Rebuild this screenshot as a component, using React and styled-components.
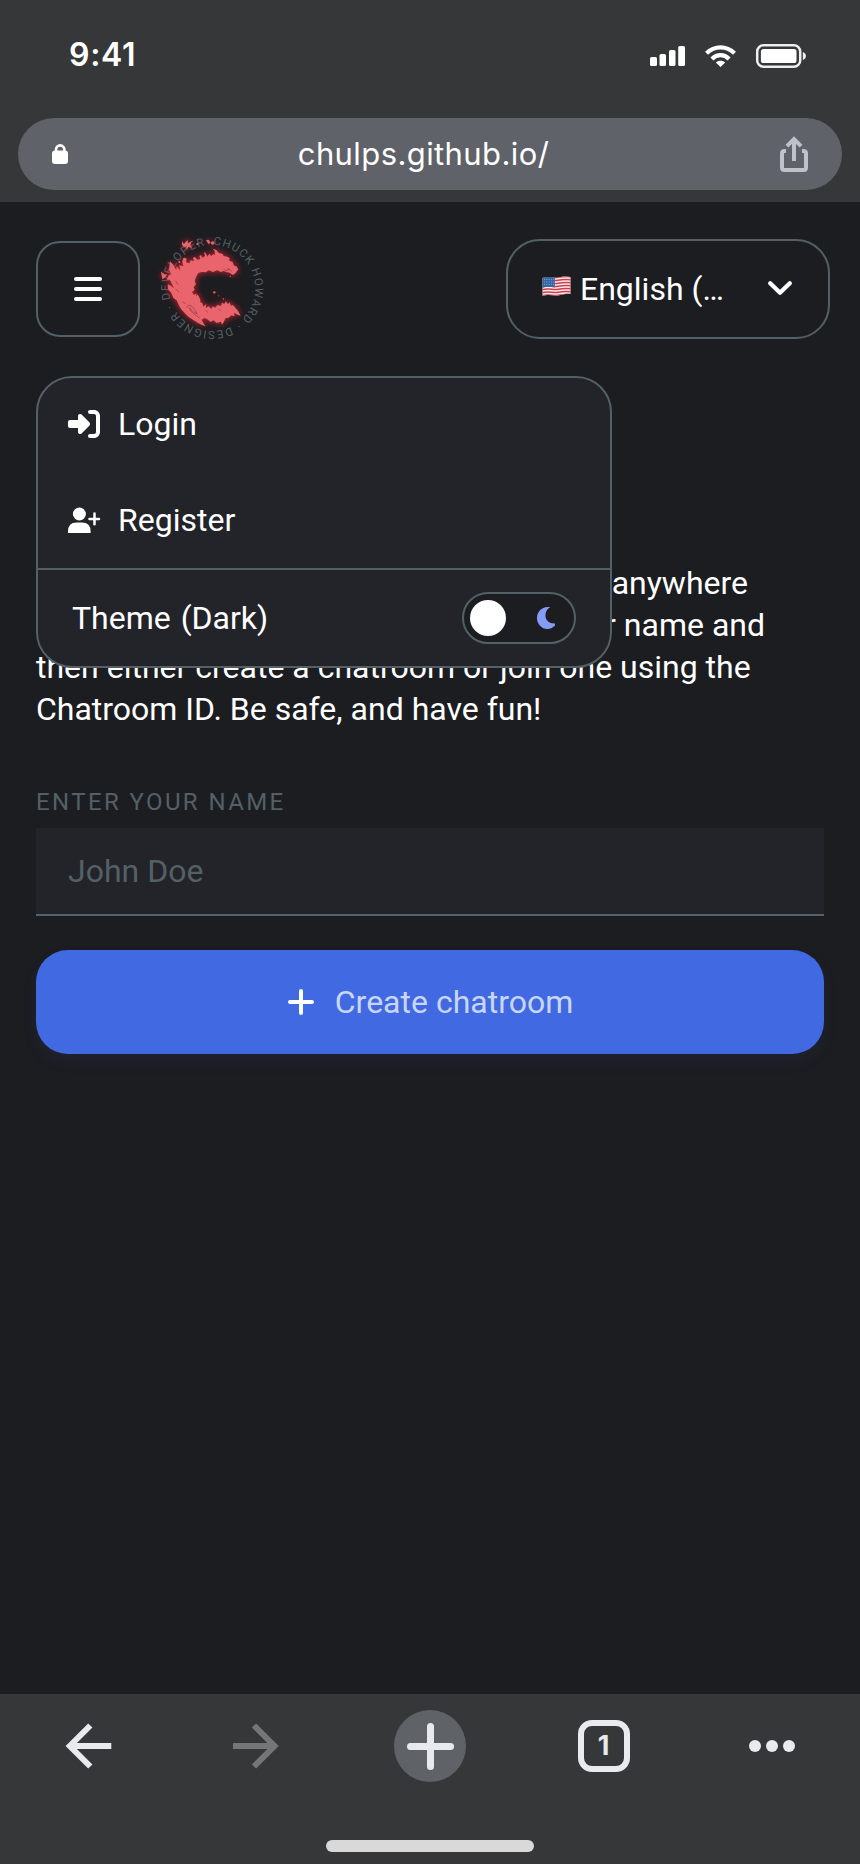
import React from 'react';
import styled, { createGlobalStyle } from 'styled-components';
import { FaRightToBracket } from 'react-icons/fa6';

const color = {
  chrome: '#363738',
  page: '#1c1d21',
  surface: '#232429',
  line: '#536066',
  accent: '#4169e1',
  icon: '#e8eaed',
};

const GlobalStyle = createGlobalStyle`
  *, *::before, *::after { box-sizing: border-box; }
  body { margin: 0; background: ${color.page}; }
  button, input { font: inherit; letter-spacing: inherit; }
  svg { display: block; flex: none; overflow: visible; }
`;

const Screen = styled.div`
  width: 860px;
  height: 1864px;
  display: flex;
  flex-direction: column;
  overflow: hidden;
  background: ${color.page};
  color: #fff;
  font: 400 32px/42px Roboto, sans-serif;
`;

const BrowserHeader = styled.header`
  height: 202px;
  padding: 0 18px;
  background: ${color.chrome};
  font-family: Inter, sans-serif;
`;

const StatusBar = styled.div`
  height: 118px;
  padding: 0 36px 8px 51px;
  display: flex;
  align-items: center;
  justify-content: space-between;
`;

const Clock = styled.span`
  font-size: 32px;
  line-height: 40px;
  font-weight: 600;
  letter-spacing: 0.7px;
`;

const StatusIcons = styled.div`
  display: flex;
  align-items: center;
  gap: 20px;
  padding-top: 2px;
`;

const AddressBar = styled.div`
  height: 72px;
  padding: 0 34px;
  display: flex;
  align-items: center;
  justify-content: space-between;
  border-radius: 36px;
  background: #5f6269;
`;

const Address = styled.span`
  padding-right: 1px;
  font-size: 31px;
  letter-spacing: 0.4px;
`;

const Page = styled.main`
  flex: 1;
  padding: 37px 30px 0 36px;
`;

const NavBar = styled.nav`
  position: relative;
  height: 100px;
  display: flex;
  align-items: center;
`;

const MenuButton = styled.button`
  width: 104px;
  height: 96px;
  padding: 0;
  display: flex;
  align-items: center;
  justify-content: center;
  border: 2px solid ${color.line};
  border-radius: 24px;
  background: transparent;
  color: #fff;
`;

const LogoLink = styled.a`
  margin-left: 18px;
`;

const LanguageSelect = styled.button`
  width: 324px;
  height: 100px;
  margin-left: auto;
  padding: 0 36px 0 34px;
  display: flex;
  align-items: center;
  border: 2px solid ${color.line};
  border-radius: 34px;
  background: transparent;
  color: #fff;
`;

const LanguageName = styled.span`
  flex: 1;
  padding-left: 9px;
  text-align: left;
  white-space: nowrap;
`;

const Menu = styled.div`
  position: absolute;
  top: 137px;
  left: 0;
  z-index: 2;
  width: 576px;
  border: 2px solid ${color.line};
  border-radius: 36px;
  background: ${color.surface};
`;

const AccountItems = styled.div`
  margin-top: -2px;
`;

const MenuItem = styled.div`
  height: 96px;
  padding: 0 30px;
  display: flex;
  align-items: center;
  gap: 18px;
`;

const ThemeItem = styled(MenuItem)`
  height: 98px;
  padding: 0 34px;
  justify-content: space-between;
  border-top: 2px solid ${color.line};
  word-spacing: 2px;
`;

const Toggle = styled.button`
  width: 114px;
  height: 52px;
  padding: 0 19px 0 6px;
  display: flex;
  align-items: center;
  justify-content: space-between;
  border: 2px solid ${color.line};
  border-radius: 26px;
  background: ${color.page};
`;

const Knob = styled.span`
  width: 36px;
  height: 36px;
  border-radius: 50%;
  background: #fff;
`;

const Intro = styled.p`
  margin: 223px 0 0;
`;

const IntroLine = styled.span`
  display: block;
  width: ${(p) => p.$width}px;
  text-align: right;
  white-space: nowrap;
`;

const Form = styled.form`
  width: 788px;
  margin-top: 56px;
  display: flex;
  flex-direction: column;
`;

const Label = styled.label`
  margin-bottom: 10px;
  color: ${color.line};
  font-size: 24px;
  line-height: 32px;
  letter-spacing: 2.4px;
  text-transform: uppercase;
`;

const NameInput = styled.input`
  height: 88px;
  padding: 0 32px;
  border: 0;
  border-bottom: 2px solid ${color.line};
  border-radius: 0;
  background: ${color.surface};
  color: #fff;
  &::placeholder { color: ${color.line}; opacity: 1; }
`;

const CreateButton = styled.button`
  height: 104px;
  margin-top: 34px;
  padding: 0 0 0 1px;
  display: flex;
  align-items: center;
  justify-content: center;
  gap: 21px;
  border: 0;
  border-radius: 32px;
  background: ${color.accent};
  color: #c9d6fb;
  box-shadow: 0 8px 16px rgba(65, 105, 225, 0.07);
`;

const BrowserFooter = styled.footer`
  height: 170px;
  background: ${color.chrome};
`;

const Toolbar = styled.div`
  height: 104px;
  padding-left: 5px;
  display: grid;
  grid-template-columns: 167px 168px 180px 168px 168px;
  align-items: center;
  justify-items: center;
  color: ${color.icon};
`;

const NewTab = styled.span`
  width: 72px;
  height: 72px;
  display: flex;
  align-items: center;
  justify-content: center;
  border-radius: 50%;
  background: #5f6368;
`;

const TabCount = styled.span`
  width: 52px;
  height: 52px;
  padding-right: 1px;
  display: flex;
  align-items: center;
  justify-content: center;
  border: 6px solid ${color.icon};
  border-radius: 14px;
  font: 700 27px/40px Inter, sans-serif;
`;

const HomeIndicator = styled.div`
  width: 208px;
  height: 12px;
  margin: 42px auto 0;
  border-radius: 6px;
  background: #d9d9d9;
`;

const SignalIcon = () => (
  <svg width="35" height="21" fill="#fff">
    <rect x="0" y="11" width="7" height="9" rx="1.6" />
    <rect x="9.5" y="8" width="6.5" height="12" rx="1.6" />
    <rect x="19" y="4" width="6.5" height="16" rx="1.6" />
    <rect x="28.2" y="0" width="6.8" height="20" rx="1.6" />
  </svg>
);

const WifiIcon = () => (
  <svg width="31" height="22" fill="none" stroke="#fff" strokeWidth="4.2">
    <path d="M1.5 8.2C9.5.3 21.5.3 29.5 8.2" />
    <path d="M6.9 13.9C12 8.8 19 8.8 24.1 13.9" />
    <path d="M10.8 17.5C13.5 15 17.5 15 20.2 17.5L15.5 22Z" fill="#fff" stroke="none" />
  </svg>
);

const BatteryIcon = () => (
  <svg width="50" height="24" fill="none">
    <rect x="1.2" y="1.2" width="43" height="21.6" rx="6.3" stroke="#eee" strokeWidth="2.5" />
    <rect x="4.9" y="4.9" width="35.6" height="14.2" rx="2.6" fill="#fff" />
    <path d="M46.8 8c4.2 1.2 4.2 6.8 0 8Z" fill="#eee" />
  </svg>
);

const LockIcon = () => (
  <svg width="16" height="20">
    <rect y="6.5" width="16" height="13.5" rx="3" fill="#fff" />
    <path d="M4 8V5.6a4.2 4.2 0 0 1 8.4 0V8" fill="none" stroke="#fff" strokeWidth="2.6" />
  </svg>
);

const ShareIcon = () => (
  <svg width="28" height="36" fill="none" stroke="#bfc1cb" strokeWidth="4">
    <path d="M6 15H4.5Q2 15 2 17.5V31.5Q2 34 4.5 34H23.5Q26 34 26 31.5V17.5Q26 15 23.5 15H22" />
    <path d="M14 25V4M7 10.2L14 3.2L21 10.2" />
  </svg>
);

const MenuIcon = () => (
  <svg width="28" height="24" stroke="#fff" strokeWidth="4" strokeLinecap="round">
    <path d="M2 2H26M2 12H26M2 22H26" />
  </svg>
);

const Logo = () => (
  <svg width="108" height="108" viewBox="414 45 324 324">
    <defs>
      <filter id="glow" x="-25%" y="-25%" width="150%" height="150%">
        <feGaussianBlur stdDeviation="11" />
      </filter>
      <path id="ring" d="M576.5 75A129 129 0 1 1 576.4 75" />
      <g id="splash">
        <path d="M450 124L458 132L469 150L470 138L481 153L478 136L490 139L486 122L498 119L498 127L508 130L512 121L522 124L519 113L525 111L532 119L541 117L538 108L542 105L548 113L555 108L552 96L557 99L562 110L568 101L574 109L579 102L585 105L584 94L578 86L589 90L596 98L608 102L611 108L622 110L629 114L627 122L638 126L642 137L649 139L655 148L646 160L638 165L629 158L621 157L611 153L602 156L592 151L579 156L566 151L557 157L545 156L535 159L528 171L524 183L528 193L521 201L524 210L516 215L521 224L530 221L528 227L537 233L540 245L547 250L550 260L559 252L557 264L566 259L574 267L578 259L586 263L592 255L603 258L606 248L613 252L617 244L624 252L629 247L633 257L639 255L648 266L655 274L662 288L649 283L642 278L644 289L634 286L626 293L616 295L611 307L606 314L603 305L590 309L580 301L572 306L561 297L552 294L545 299L550 309L557 319L544 314L533 308L520 300L506 291L496 281L483 267L476 255L470 241L460 234L454 219L444 208L443 193L449 195L462 205L455 190L449 179L440 179L446 166L454 163L447 150Z" />
        <path d="M423 155L434 163L442 164L434 173L427 178Z" />
        <path d="M487 64L492 72L496 67L503 60L504 70L515 64L511 76L517 83L505 81L500 91L499 79L492 82L486 74Z" />
        <path d="M558 60L566 59L572 68L565 72Z" />
        <circle cx="494" cy="119" r="6" /><circle cx="578" cy="69" r="5" />
        <circle cx="583" cy="217" r="3.5" /><circle cx="532" cy="72" r="3" />
        <circle cx="596" cy="227" r="1.5" /><circle cx="610" cy="237" r="2" />
        <circle cx="631" cy="169" r="2" /><circle cx="478" cy="126" r="3" />
        <path d="M530 222L536 228L542 242L537 247L530 236Z" />
      </g>
    </defs>
    <text fill="#536066" fontFamily="Roboto, sans-serif" fontSize="34">
      <textPath href="#ring" startOffset="3" textLength="784" lengthAdjust="spacing">CHUCK HOWARD · DESIGNER · DEVELOPER</textPath>
    </text>
    <use href="#splash" fill="#f52835" filter="url(#glow)" opacity="0.85" />
    <use href="#splash" fill="#e9646c" />
    <g fill="none" stroke="#7d333b" strokeWidth="1.6">
      <path d="M500 263L505 255L516 259L524 268L532 282L523 277L513 269L508 263L512 273L526 285L539 294" />
      <path d="M466 182L475 195M467 207L477 216M488 246L496 251M610 148L621 152L629 145M621 145L635 153M595 267L602 272M558 271L563 278" />
    </g>
  </svg>
);

const FlagIcon = () => (
  <svg width="29" height="21" viewBox="0 0 29 21">
    <defs>
      <clipPath id="flag">
        <path d="M.5 2C7-.5 11 2.5 16 1.5S24 0 28.5 1V18C23 17 21 19 16 19.5S7 18 .5 20Z" />
      </clipPath>
    </defs>
    <g clipPath="url(#flag)" transform="translate(0 -3)">
      <path fill="#f3eeee" d="M0 0H29V21H0Z" />
      <g stroke="#d43a4b" strokeWidth="1.5" fill="none">
        {[0, 3, 6, 9, 12, 15, 18].map((y) => (
          <path key={y} d={`M0 ${y + 1.7}C7 ${y - 0.5} 11 ${y + 2.3} 16 ${y + 1.3}S24 ${y} 29 ${y + 0.8}`} />
        ))}
      </g>
      <path fill="#3566a5" d="M0 0H12.8V11.6Q6 9.8 0 12Z" />
      <path d="M2 3.5H12M2 6H12M2 8.5H12" stroke="#8fb0d6" strokeWidth=".8" strokeDasharray="1 1.3" />
    </g>
  </svg>
);

const ChevronIcon = () => (
  <svg width="24" height="14" viewBox="0 0 24 14" fill="none" stroke="#fff" strokeWidth="4.3" strokeLinecap="round" strokeLinejoin="round">
    <path d="M2.2 1.2L12 10.8L21.8 1.2" />
  </svg>
);

const RegisterIcon = () => (
  <svg width="32" height="27" fill="#fff">
    <circle cx="11.4" cy="7" r="6.5" />
    <path d="M0 26V24.5Q0 15.5 8.5 15.5H14Q22.6 15.5 22.6 24.5V26Z" />
    <path d="M26.5 6.5V17.3M21.5 12H31" stroke="#fff" strokeWidth="2.5" strokeLinecap="round" />
  </svg>
);

const MoonIcon = () => (
  <svg width="18" height="22" fill="#849cf5">
    <path d="M10.5 0H13.5C6 3.5 6.5 17 18 16.5V18.5C15.8 21 13 22 10.5 22C4.5 22 0 17 0 11S4.5 0 10.5 0Z" />
  </svg>
);

const PlusIcon = ({ size, weight }) => (
  <svg width={size} height={size} viewBox={`0 0 ${size} ${size}`} stroke="currentColor" strokeWidth={weight} strokeLinecap="round">
    <path d={`M${size / 2} ${weight / 2}V${size - weight / 2}M${weight / 2} ${size / 2}H${size - weight / 2}`} />
  </svg>
);

const WhitePlus = styled.span`
  color: #fff;
`;

const ArrowIcon = ({ forward }) => (
  <svg width="46" height="46" viewBox="0 0 46 46" fill="none" stroke={forward ? '#757678' : color.icon} strokeWidth="6">
    <path d={forward ? 'M0 23H40M21 2.5L41.5 23L21 43.5' : 'M45.3 23H5.5M24.3 2.5L3.8 23L24.3 43.5'} />
  </svg>
);

const MoreIcon = () => (
  <svg width="46" height="12" fill={color.icon}>
    <circle cx="6" cy="6" r="6" /><circle cx="23" cy="6" r="6" /><circle cx="40" cy="6" r="6" />
  </svg>
);

export default function App() {
  return (
    <Screen>
      <GlobalStyle />
      <BrowserHeader>
        <StatusBar>
          <Clock>9:41</Clock>
          <StatusIcons><SignalIcon /><WifiIcon /><BatteryIcon /></StatusIcons>
        </StatusBar>
        <AddressBar>
          <LockIcon />
          <Address>chulps.github.io/</Address>
          <ShareIcon />
        </AddressBar>
      </BrowserHeader>

      <Page>
        <NavBar>
          <MenuButton aria-label="Menu"><MenuIcon /></MenuButton>
          <LogoLink><Logo /></LogoLink>
          <LanguageSelect>
            <FlagIcon />
            <LanguageName>English (…</LanguageName>
            <ChevronIcon />
          </LanguageSelect>
          <Menu>
            <AccountItems>
              <MenuItem><FaRightToBracket size={32} />Login</MenuItem>
              <MenuItem><RegisterIcon />Register</MenuItem>
            </AccountItems>
            <ThemeItem>
              Theme (Dark)
              <Toggle aria-label="Theme"><Knob /><MoonIcon /></Toggle>
            </ThemeItem>
          </Menu>
        </NavBar>

        <Intro>
          <IntroLine $width={712}>anywhere</IntroLine>
          <IntroLine $width={729}>your name and</IntroLine>
          then either create a chatroom or join one using the<br />
          Chatroom ID. Be safe, and have fun!
        </Intro>

        <Form>
          <Label htmlFor="name">Enter your name</Label>
          <NameInput id="name" placeholder="John Doe" />
          <CreateButton type="button">
            <WhitePlus><PlusIcon size={26} weight={4} /></WhitePlus>
            Create chatroom
          </CreateButton>
        </Form>
      </Page>

      <BrowserFooter>
        <Toolbar>
          <ArrowIcon />
          <ArrowIcon forward />
          <NewTab><PlusIcon size={47} weight={7} /></NewTab>
          <TabCount>1</TabCount>
          <MoreIcon />
        </Toolbar>
        <HomeIndicator />
      </BrowserFooter>
    </Screen>
  );
}
